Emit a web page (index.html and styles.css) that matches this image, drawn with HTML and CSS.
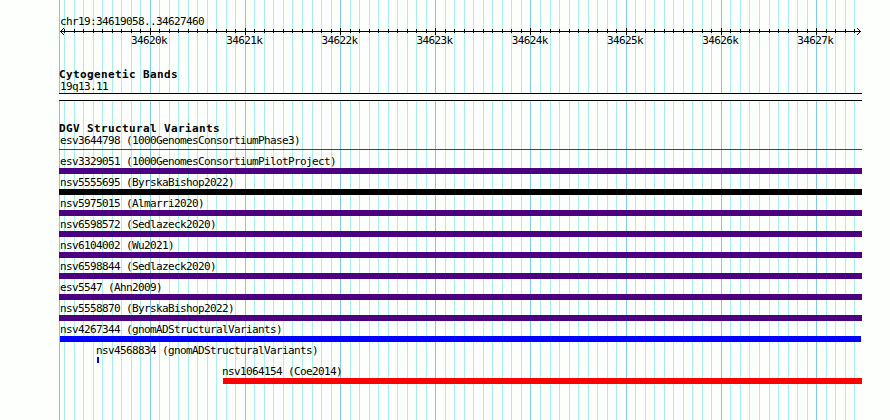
FILE: index.html
```
<!DOCTYPE html>
<html lang="en">
<head>
<meta charset="utf-8">
<title>chr19:34619058..34627460</title>
<link rel="stylesheet" href="styles.css">
</head>
<body>
<main class="browser">
  <svg class="grid" id="grid" width="890" height="420" shape-rendering="crispEdges" aria-hidden="true"></svg>
  <header class="ruler">
    <div class="label region">chr19:34619058..34627460</div>
    <svg class="axis" id="axis" width="803" height="9" shape-rendering="crispEdges" aria-hidden="true"></svg>
    <div class="ticks label"><span>34620k</span><span>34621k</span><span>34622k</span><span>34623k</span><span>34624k</span><span>34625k</span><span>34626k</span><span>34627k</span></div>
  </header>
  <section class="bands">
    <h2>Cytogenetic Bands</h2>
    <div class="label">19q13.11</div>
    <div class="band"></div>
  </section>
  <section class="variants">
    <h2>DGV Structural Variants</h2>
    <div class="track"><div class="label">esv3644798 (1000GenomesConsortiumPhase3)</div><div class="bar thin"></div></div>
    <div class="track"><div class="label">esv3329051 (1000GenomesConsortiumPilotProject)</div><div class="bar purple"></div></div>
    <div class="track"><div class="label">nsv5555695 (ByrskaBishop2022)</div><div class="bar black"></div></div>
    <div class="track"><div class="label">nsv5975015 (Almarri2020)</div><div class="bar purple"></div></div>
    <div class="track"><div class="label">nsv6598572 (Sedlazeck2020)</div><div class="bar purple"></div></div>
    <div class="track"><div class="label">nsv6104002 (Wu2021)</div><div class="bar purple"></div></div>
    <div class="track"><div class="label">nsv6598844 (Sedlazeck2020)</div><div class="bar purple"></div></div>
    <div class="track"><div class="label">esv5547 (Ahn2009)</div><div class="bar purple"></div></div>
    <div class="track"><div class="label">nsv5558870 (ByrskaBishop2022)</div><div class="bar purple"></div></div>
    <div class="track"><div class="label">nsv4267344 (gnomADStructuralVariants)</div><div class="bar blue inset"></div></div>
    <div class="track short"><div class="label">nsv4568834 (gnomADStructuralVariants)</div><div class="bar blue"></div></div>
    <div class="track late"><div class="label">nsv1064154 (Coe2014)</div><div class="bar red"></div></div>
  </section>
</main>
<script src="grid.js"></script>
</body>
</html>
```
FILE: styles.css
```
body {
  margin: 0;
  background: #fdfffc;
  color: #000;
}
.browser {
  position: relative;
  box-sizing: border-box;
  width: 890px;
  height: 420px;
  padding: 16px 28px 0 59px;
  overflow: hidden;
}
.grid {
  position: absolute;
  inset: 0;
  z-index: -1;
}
.minor { fill: #aaeeed; }
.major { fill: #7fc9ea; }
.label {
  height: 12px;
  padding-left: 1px;
  font: 11px/12px "DejaVu Sans Mono", monospace;
  letter-spacing: -0.622px;
  white-space: pre;
}
h2 {
  height: 12px;
  margin: 0;
  font: bold 11px/12px "DejaVu Sans Mono", monospace;
  letter-spacing: 0.378px;
  white-space: pre;
}
.ruler { height: 53px; }
.region { height: 11px; }
.axis { display: block; }
.ticks {
  display: flex;
  gap: 59.2px;
  margin-top: -1px;
  padding-left: 72px;
}
.ticks span { width: 36px; }
.bands { height: 54px; }
.band {
  box-sizing: border-box;
  height: 8px;
  border: solid #000;
  border-width: 1px 0;
  background: #fdfffc;
}
.track { height: 21px; }
.bar { height: 6px; }
.thin { height: 1px; margin-top: 2px; background: #e00000; }
.purple { background: #4b0082; }
.black { background: #000; }
.blue { background: #00f; }
.red { background: #f00; }
.inset { margin: 0 1px; }
.short { padding-left: 37px; }
.late { padding-left: 163px; }
.short .label, .late .label { padding-left: 0; }
.short .bar { width: 2px; margin-left: 1px; }
.late .bar { margin-left: 1px; }
```
FILE: grid.js
```
const start = 34619058, end = 34627460, left = 60, width = 800;
const ns = "http://www.w3.org/2000/svg";
const grid = document.getElementById("grid");
const axis = document.getElementById("axis");
function rect(svg, x, y, w, h, cls) {
  const r = document.createElementNS(ns, "rect");
  const attrs = { x, y, width: w, height: h, class: cls };
  for (const k in attrs) r.setAttribute(k, attrs[k]);
  svg.appendChild(r);
}
rect(grid, 59, 0, 1, 420, "major");
rect(axis, 1, 4, 801, 1, "line");
for (let p = 34619100; p < end; p += 100) {
  const x = Math.round(left + (p - start) * width / (end - start + 1));
  const major = p % 1000 === 0;
  rect(grid, x, 0, 1, 420, major ? "major" : "minor");
  rect(axis, x - 59, major ? 1 : 2, 1, major ? 7 : 4, "line");
}
for (let i = 1; i < 4; i++) {
  rect(axis, 1 + i, 4 - i, 1, 1, "line");
  rect(axis, 1 + i, 4 + i, 1, 1, "line");
  rect(axis, 801 - i, 4 - i, 1, 1, "line");
  rect(axis, 801 - i, 4 + i, 1, 1, "line");
}
```
